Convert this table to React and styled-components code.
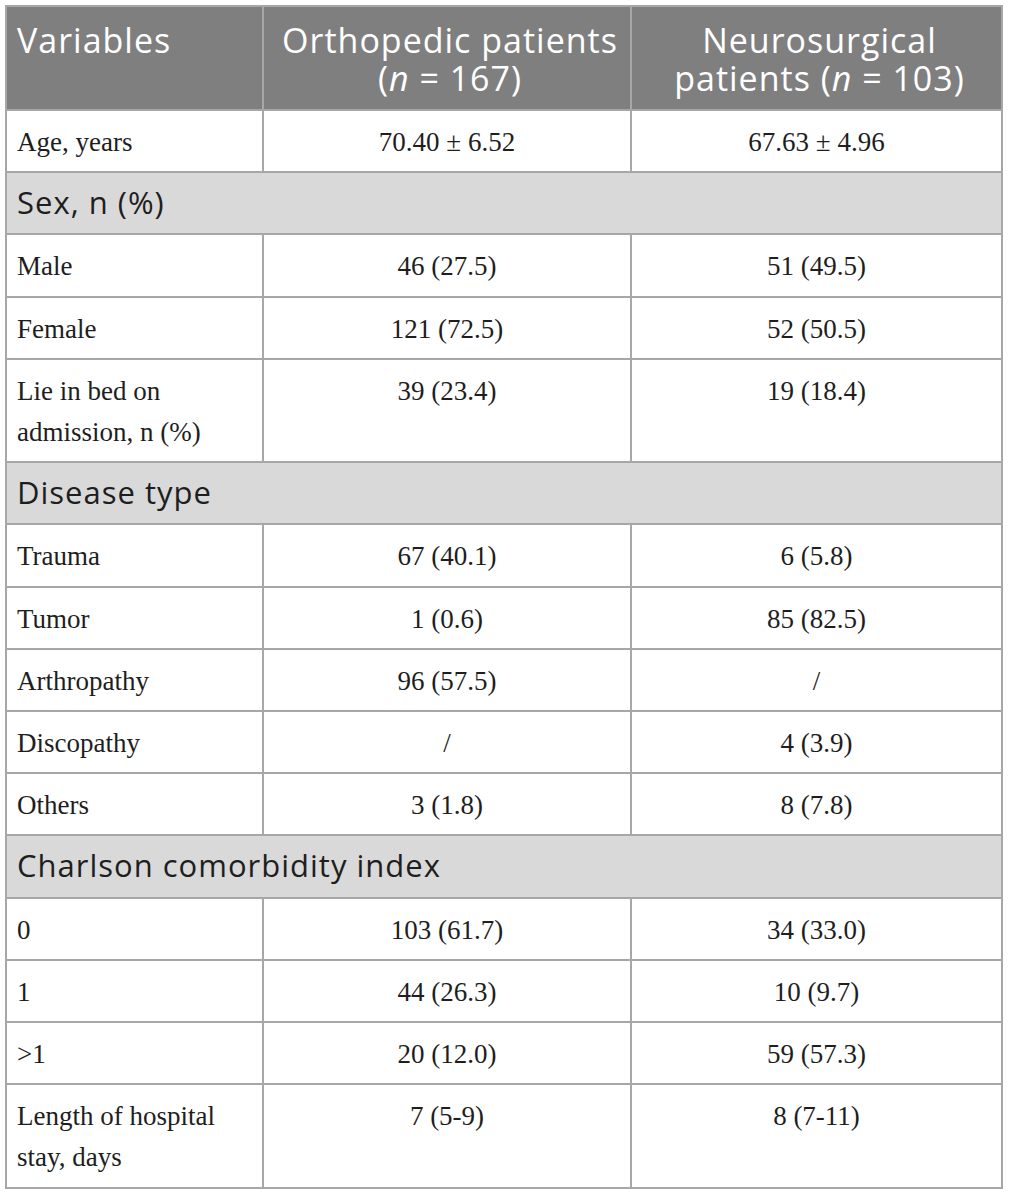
import React from 'react';
import styled, { createGlobalStyle } from 'styled-components';

const GlobalStyle = createGlobalStyle`
  html, body {
    margin: 0;
    padding: 0;
    background: #ffffff;
  }
`;

const Page = styled.div`
  padding: 5px;
  width: 998px;
`;

const Table = styled.table`
  width: 998px;
  table-layout: fixed;
  border-collapse: separate;
  border-spacing: 0;
  border-top: 2px solid #a7a7a7;
  border-left: 2px solid #a7a7a7;
`;

const HeadCell = styled.th`
  box-sizing: border-box;
  background: #7f7f7f;
  color: #ffffff;
  font-family: 'Open Sans', 'Noto Sans', sans-serif;
  font-weight: 400;
  font-size: 34px;
  letter-spacing: 1px;
  line-height: 37.5px;
  padding: 15px 4px 12px 10px;
  text-align: ${(p) => (p.$center ? 'center' : 'left')};
  vertical-align: top;
  border-right: 2px solid #a7a7a7;
  border-bottom: 2px solid #a7a7a7;
  white-space: nowrap;

  em {
    font-style: italic;
  }
`;

const Cell = styled.td`
  box-sizing: border-box;
  background: #ffffff;
  color: #1e1e1e;
  font-family: 'Liberation Serif', 'Times New Roman', serif;
  font-size: 27px;
  line-height: 41.2px;
  padding: 11px 10px 8px 10px;
  text-align: ${(p) => (p.$center ? 'center' : 'left')};
  vertical-align: top;
  border-right: 2px solid #a7a7a7;
  border-bottom: 2px solid #a7a7a7;
`;

const SectionCell = styled.td`
  box-sizing: border-box;
  background: #d9d9d9;
  color: #1e1e1e;
  font-family: 'Open Sans', 'Noto Sans', sans-serif;
  font-size: 31px;
  letter-spacing: 1px;
  line-height: 41.2px;
  padding: 9px 10px 10px 10px;
  text-align: left;
  border-right: 2px solid #a7a7a7;
  border-bottom: 2px solid #a7a7a7;
`;

const rows = [
  { label: 'Age, years', a: '70.40 \u00b1 6.52', b: '67.63 \u00b1 4.96' },
  { section: 'Sex, n (%)' },
  { label: 'Male', a: '46 (27.5)', b: '51 (49.5)' },
  { label: 'Female', a: '121 (72.5)', b: '52 (50.5)' },
  { label: 'Lie in bed on admission, n (%)', a: '39 (23.4)', b: '19 (18.4)' },
  { section: 'Disease type' },
  { label: 'Trauma', a: '67 (40.1)', b: '6 (5.8)' },
  { label: 'Tumor', a: '1 (0.6)', b: '85 (82.5)' },
  { label: 'Arthropathy', a: '96 (57.5)', b: '/' },
  { label: 'Discopathy', a: '/', b: '4 (3.9)' },
  { label: 'Others', a: '3 (1.8)', b: '8 (7.8)' },
  { section: 'Charlson comorbidity index' },
  { label: '0', a: '103 (61.7)', b: '34 (33.0)' },
  { label: '1', a: '44 (26.3)', b: '10 (9.7)' },
  { label: '>1', a: '20 (12.0)', b: '59 (57.3)' },
  { label: 'Length of hospital stay, days', a: '7 (5-9)', b: '8 (7-11)' },
];

const App = () => {
  return (
    <Page>
      <GlobalStyle />
      <Table>
        <colgroup>
          <col style={{ width: '257px' }} />
          <col style={{ width: '368px' }} />
          <col style={{ width: '371px' }} />
        </colgroup>
        <thead>
          <tr>
            <HeadCell>Variables</HeadCell>
            <HeadCell $center>
              Orthopedic patients
              <br />(<em>n</em> = 167)
            </HeadCell>
            <HeadCell $center>
              Neurosurgical
              <br />
              patients (<em>n</em> = 103)
            </HeadCell>
          </tr>
        </thead>
        <tbody>
          {rows.map((r, i) =>
            r.section ? (
              <tr key={i}>
                <SectionCell colSpan={3}>{r.section}</SectionCell>
              </tr>
            ) : (
              <tr key={i}>
                <Cell>{r.label}</Cell>
                <Cell $center>{r.a}</Cell>
                <Cell $center>{r.b}</Cell>
              </tr>
            )
          )}
        </tbody>
      </Table>
    </Page>
  );
};

export default App;
